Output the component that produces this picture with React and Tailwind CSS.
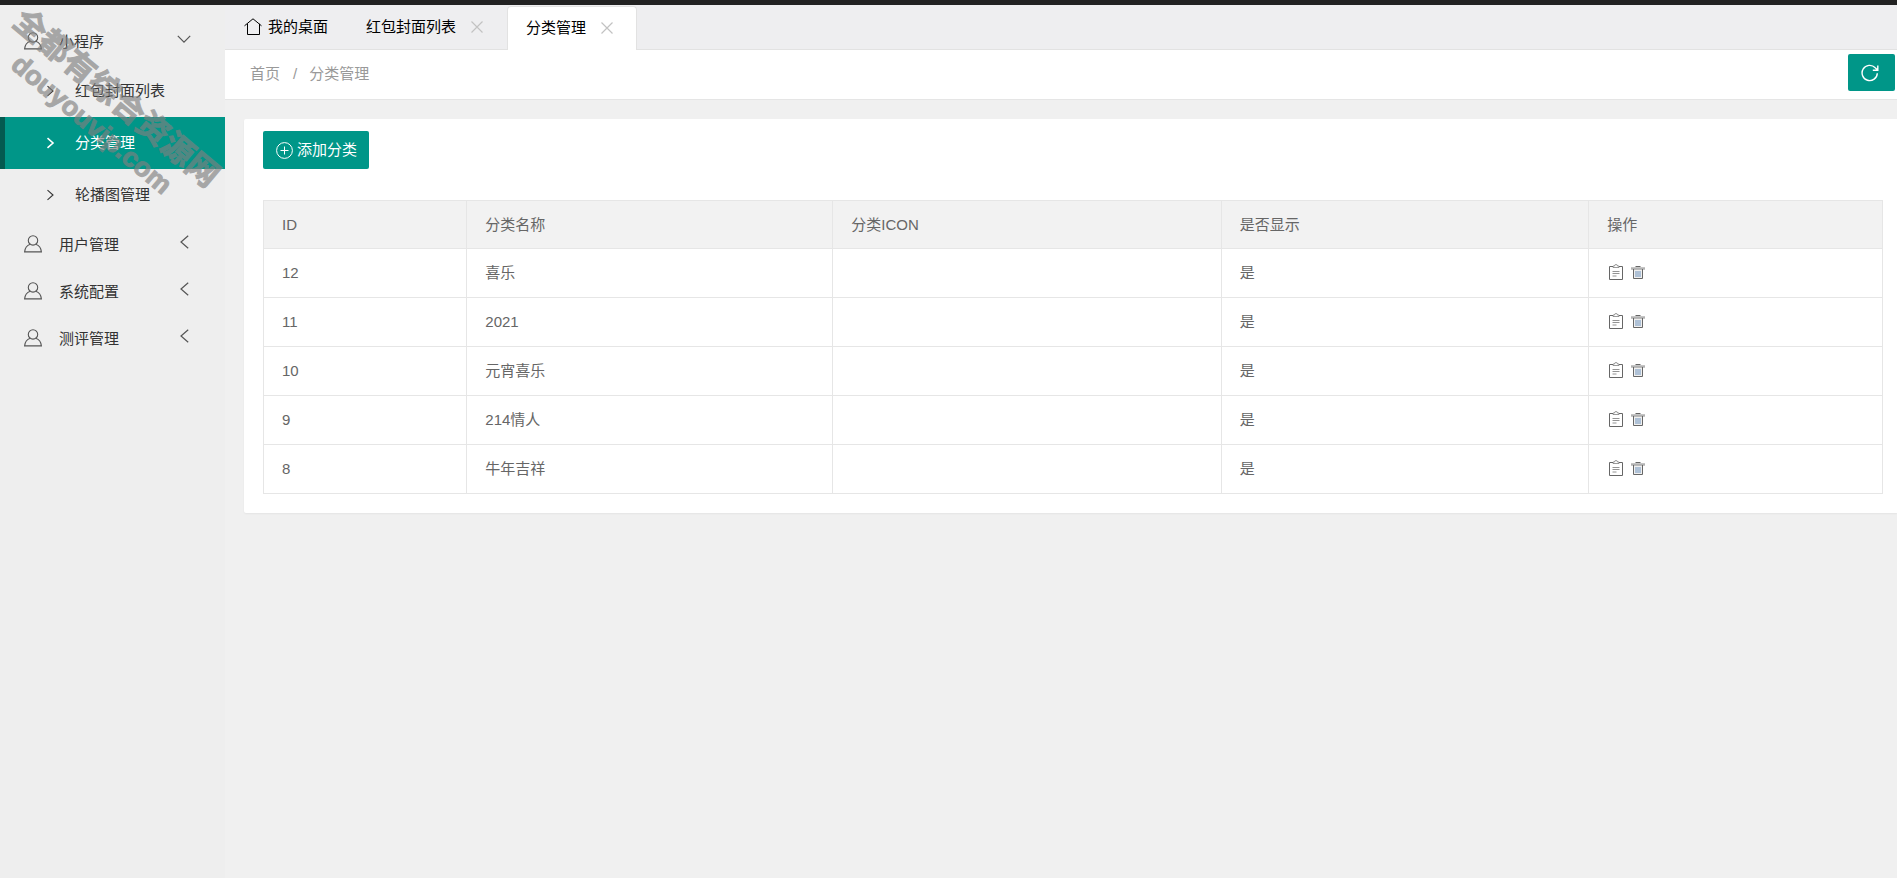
import React from 'react';

const Svg = ({ className, children, box = '0 0 18 18', width = 1.2 }) => (
  <svg className={className} viewBox={box} fill="none" stroke="currentColor" strokeWidth={width} aria-hidden="true">
    {children}
  </svg>
);

const UserIcon = () => (
  <Svg className="h-[18px] w-[18px] shrink-0" width={1.1}>
    <circle cx="9" cy="5.4" r="4.7" />
    <path d="M6.2 9.2C3 10.200 1 12.500.6 16.900h16.800C17 12.500 15 10.200 11.8 9.2" />
  </Svg>
);

const HomeIcon = () => (
  <Svg className="h-[18px] w-[18px] shrink-0" width={1}>
    <path d="M.5 7.800 9 .8l8.500 7M3.500 5.800v10.700h12V5.800" />
  </Svg>
);

const CloseIcon = () => (
  <Svg className="h-3 w-3" box="0 0 12 12" width={1.2}>
    <path d="m.5.5 11 11M11.500.5l-11 11" />
  </Svg>
);

const ChevronDown = () => (
  <Svg className="h-3.5 w-3.5" box="0 0 14 14">
    <path d="m.8 3.800 6.200 6.400 6.200-6.400" />
  </Svg>
);

const ChevronLeft = () => (
  <Svg className="h-3.5 w-3.5" box="0 0 14 14">
    <path d="M11.200.8 4 7l7.200 6.200" />
  </Svg>
);

const ChevronRight = ({ bold }) => (
  <Svg className="h-3 w-3 shrink-0" box="0 0 12 12" width={bold ? 1.6 : 1.1}>
    <path d="m2.500 1.200 5.500 4.800-5.500 4.800" />
  </Svg>
);

const PlusIcon = () => (
  <Svg className="h-[17px] w-[17px] shrink-0" box="0 0 17 17" width={1}>
    <circle cx="8.500" cy="8.500" r="7.900" />
    <path d="M8.500 4.500v8M4.500 8.500h8" />
  </Svg>
);

const RefreshIcon = () => (
  <Svg className="h-[18px] w-[18px]" width={1.4}>
    <path d="M16.300 9.200A7.600 7.600 0 1 1 14.200 3.700L16.600 6M16.800 1.500v4.800h-5" />
  </Svg>
);

const FormIcon = () => (
  <Svg className="h-4 w-4" box="0 0 16 16" width={1}>
    <path d="M5 2.500H1.500v13h13v-13H11" />
    <path d="M5 3.500V2h1.500a1.500 1.500 0 0 1 3 0H11v1.500z" strokeOpacity=".65" />
    <path d="M4.500 7.500h7M4.500 9.500h7M4.500 12h4" strokeOpacity=".7" />
  </Svg>
);

const TrashIcon = () => (
  <Svg className="h-4 w-4" box="0 0 16 16" width={1}>
    <path d="M5.500 2.500h5" />
    <path d="M1 4.500h14" strokeWidth="2.500" strokeOpacity=".5" />
    <path d="M3.500 5v9.500h9V5" fill="currentColor" fillOpacity=".1" />
    <path d="M6 7v6M8 7v6M10 7v6" stroke="#6f93bd" />
  </Svg>
);

const rows = [
  ['12', '喜乐'],
  ['11', '2021'],
  ['10', '元宵喜乐'],
  ['9', '214情人'],
  ['8', '牛年吉祥'],
];

const subItems = ['红包封面列表', '分类管理', '轮播图管理'];

function MenuHead({ label, open }) {
  return (
    <button type="button" className="flex h-[47px] w-full items-center pr-[34px] pl-6 text-left">
      <span className="pb-0.5 text-[#555]">
        <UserIcon />
      </span>
      <span className="ml-[17px] flex-1">{label}</span>
      <span className="pb-1.5 text-[#555]">{open ? <ChevronDown /> : <ChevronLeft />}</span>
    </button>
  );
}

function Sidebar() {
  return (
    <nav className="relative w-[225px] shrink-0 bg-[#eeeeee] pt-[13px] text-[#333]">
      <MenuHead label="小程序" open />
      {subItems.map((label) => {
        const active = label === '分类管理';
        return (
          <a
            key={label}
            href="#"
            className={
              active
                ? 'flex h-[52px] items-center border-l-[5px] border-[#045a50] bg-[#009688] pl-10 text-white'
                : 'flex h-[52px] items-center border-l-[5px] border-transparent pl-10'
            }
          >
            <ChevronRight bold={active} />
            <span className="ml-[18px]">{label}</span>
          </a>
        );
      })}
      <MenuHead label="用户管理" />
      <MenuHead label="系统配置" />
      <MenuHead label="测评管理" />
      <div className="pointer-events-none absolute top-[76px] left-[-25px] w-[272px] rotate-40 text-center font-bold whitespace-nowrap text-[#808080] opacity-65 [-webkit-text-stroke:1px_#808080]">
        <div className="pr-5 text-[32px] leading-9">全都有综合资源网</div>
        <div className="pr-5 text-[27px] leading-9">douyouvip.com</div>
      </div>
    </nav>
  );
}

function Tab({ label, active }) {
  return (
    <div
      className={
        active
          ? 'mt-px -mb-px flex items-center gap-[15px] rounded-t-sm border border-b-0 border-[#e2e2e2] bg-white pr-[23px] pb-0.5 pl-[18px]'
          : 'flex items-center gap-[15px] pr-6 pl-5'
      }
    >
      <a href="#">{label}</a>
      <button type="button" aria-label="关闭" className="text-[#c2c2c2]">
        <CloseIcon />
      </button>
    </div>
  );
}

export default function App() {
  return (
    <div className="flex min-h-screen flex-col bg-[#f0f0f0] font-['Liberation_Sans','Noto_Sans_CJK_SC',sans-serif] text-[15px] leading-5">
      <div className="h-[5px] bg-[#222]" />
      <div className="flex flex-1">
        <Sidebar />
        <main className="min-w-0 flex-1">
          <div className="flex h-[45px] border-b border-[#e2e2e2] bg-[#eeeef0] text-black">
            <a href="#" className="flex items-center gap-1.5 pr-[18px] pl-[19px]">
              <HomeIcon />
              我的桌面
            </a>
            <Tab label="红包封面列表" />
            <Tab label="分类管理" active />
          </div>
          <div className="flex h-[50px] items-start justify-between border-b border-[#e5e5e5] bg-white pt-1 pr-0.5 pl-[25px] text-[#999]">
            <div className="flex pt-2.5">
              <a href="#">首页</a>
              <span className="mr-3 ml-[13px]">/</span>
              <span>分类管理</span>
            </div>
            <button type="button" aria-label="刷新" className="flex h-[37px] w-[47px] items-center justify-center rounded-xs bg-[#009688] pr-[3px] text-white">
              <RefreshIcon />
            </button>
          </div>
          <section className="mt-[19px] ml-[19px] rounded-l-xs bg-white pt-3 pr-3.5 pb-[19px] pl-[19px] shadow-[0_1px_2px_rgba(0,0,0,0.05)]">
            <button type="button" className="flex h-[38px] items-center gap-1 rounded-xs bg-[#009688] pr-3 pl-[13px] text-white">
              <PlusIcon />
              添加分类
            </button>
            <table className="mt-[31px] w-full table-fixed border-collapse text-left text-[#666]">
              <colgroup>
                <col className="w-[12.56%]" />
                <col className="w-[22.6%]" />
                <col className="w-[24%]" />
                <col className="w-[22.7%]" />
                <col className="w-[18.14%]" />
              </colgroup>
              <thead className="bg-[#f2f2f2]">
                <tr className="h-12">
                  {['ID', '分类名称', '分类ICON', '是否显示', '操作'].map((h) => (
                    <th key={h} className="border border-[#e6e6e6] px-[18px] font-normal">
                      {h}
                    </th>
                  ))}
                </tr>
              </thead>
              <tbody>
                {rows.map(([id, name]) => (
                  <tr key={id} className="h-[49px]">
                    <td className="border border-[#e6e6e6] px-[18px]">{id}</td>
                    <td className="border border-[#e6e6e6] px-[18px]">{name}</td>
                    <td className="border border-[#e6e6e6] px-[18px]" />
                    <td className="border border-[#e6e6e6] px-[18px]">是</td>
                    <td className="border border-[#e6e6e6] px-[18px]">
                      <div className="flex gap-1.5 pb-0.5 pl-px">
                        <button type="button" aria-label="编辑">
                          <FormIcon />
                        </button>
                        <button type="button" aria-label="删除">
                          <TrashIcon />
                        </button>
                      </div>
                    </td>
                  </tr>
                ))}
              </tbody>
            </table>
          </section>
        </main>
      </div>
    </div>
  );
}
